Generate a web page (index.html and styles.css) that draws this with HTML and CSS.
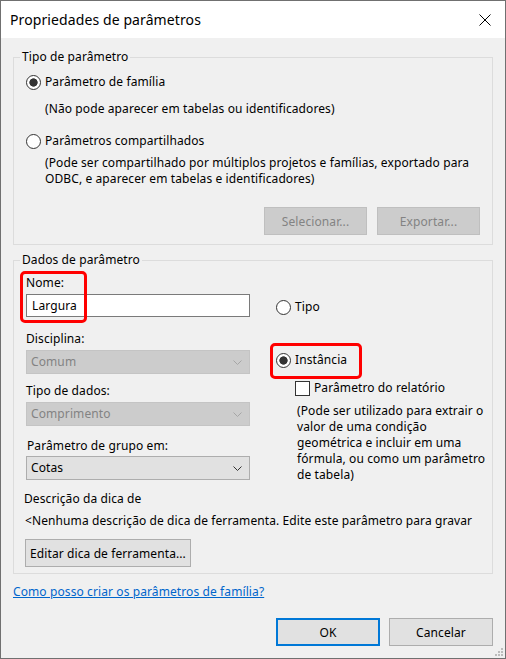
FILE: index.html
```html
<!DOCTYPE html>
<html lang="pt">
<head>
  <meta charset="UTF-8">
  <title>Propriedades de parâmetros</title>
  <link rel="stylesheet" href="styles.css">
</head>
<body>
  <div class="window">
    <div class="titlebar">
      <span class="title">Propriedades de parâmetros</span>
      <svg class="close" viewBox="0 0 12 12"><path d="M0.5 0.5L11.5 11.5M11.5 0.5L0.5 11.5" stroke="#000" stroke-width="1" fill="none"/></svg>
    </div>
    <div class="content">
      <fieldset class="group">
        <legend>Tipo de parâmetro</legend>
        <div class="group-body type-body">
          <div class="option"><span class="radio checked"></span>Parâmetro de família</div>
          <p class="note note-family">(Não pode aparecer em tabelas ou identificadores)</p>
          <div class="option option-shared"><span class="radio"></span>Parâmetros compartilhados</div>
          <p class="note note-shared">(Pode ser compartilhado por múltiplos projetos e famílias, exportado para<br>ODBC, e aparecer em tabelas e identificadores)</p>
          <div class="group-actions">
            <button class="btn" disabled>Selecionar...</button>
            <button class="btn" disabled>Exportar...</button>
          </div>
        </div>
      </fieldset>

      <fieldset class="group group-data">
        <legend>Dados de parâmetro</legend>
        <div class="group-body data-body">
          <div class="data-columns">
            <div class="data-left">
              <div class="field-name">
                <div class="field-label">Nome:</div>
                <div class="input">Largura</div>
                <span class="highlight highlight-name"></span>
              </div>
              <div class="field-label label-discipline">Disciplina:</div>
              <div class="combo disabled">Comum
                <svg class="chevron" viewBox="0 0 9 5"><path d="M0.5 0.5L4.5 4.5L8.5 0.5" fill="none" stroke="currentColor"/></svg>
              </div>
              <div class="field-label label-datatype">Tipo de dados:</div>
              <div class="combo disabled">Comprimento
                <svg class="chevron" viewBox="0 0 9 5"><path d="M0.5 0.5L4.5 4.5L8.5 0.5" fill="none" stroke="currentColor"/></svg>
              </div>
              <div class="field-label label-group">Parâmetro de grupo em:</div>
              <div class="combo combo-group">Cotas
                <svg class="chevron" viewBox="0 0 9 5"><path d="M0.5 0.5L4.5 4.5L8.5 0.5" fill="none" stroke="currentColor"/></svg>
              </div>
            </div>
            <div class="data-right">
              <div class="option option-type"><span class="radio"></span>Tipo</div>
              <div class="option option-instance"><span class="radio checked"></span>Instância
                <span class="highlight highlight-instance"></span>
              </div>
              <div class="check-row"><span class="checkbox"></span>Parâmetro do relatório</div>
              <p class="report-note">(Pode ser utilizado para extrair o<br>valor de uma condição<br>geométrica e incluir em uma<br>fórmula, ou como um parâmetro<br>de tabela)</p>
            </div>
          </div>
          <div class="tooltip-title">Descrição da dica de</div>
          <div class="tooltip-text">&lt;Nenhuma descrição de dica de ferramenta. Edite este parâmetro para gravar</div>
          <button class="btn btn-tooltip">Editar dica de ferramenta...</button>
        </div>
      </fieldset>

      <a class="help-link" href="#">Como posso criar os parâmetros de família?</a>

      <div class="footer">
        <button class="btn btn-ok">OK</button>
        <button class="btn">Cancelar</button>
      </div>
    </div>
    <svg class="grip" viewBox="0 0 9 9">
      <rect x="6" y="0" width="2" height="2"/>
      <rect x="3" y="3" width="2" height="2"/>
      <rect x="6" y="3" width="2" height="2"/>
      <rect x="0" y="6" width="2" height="2"/>
      <rect x="3" y="6" width="2" height="2"/>
      <rect x="6" y="6" width="2" height="2"/>
    </svg>
  </div>
</body>
</html>
```

FILE: styles.css
```css
* {
  margin: 0;
  padding: 0;
  box-sizing: border-box;
}
body {
  background: #fff;
  font-family: "Noto Sans", "Segoe UI", sans-serif;
  font-size: 12px;
  line-height: 16px;
  letter-spacing: 0.1px;
  color: #000;
}
.window {
  position: relative;
  width: 506px;
  height: 659px;
  border: 1px solid #707070;
  background: #f0f0f0;
}
.titlebar {
  height: 37px;
  background: #fff;
  display: flex;
  align-items: center;
  justify-content: space-between;
  padding: 0 14px 0 9px;
}
.title {
  font-size: 14px;
}
.close {
  width: 12px;
  height: 12px;
}
.content {
  padding: 11px 12px 0;
}
.group {
  border: 1px solid #dcdcdc;
  min-width: 0;
}
.group legend {
  margin-left: 6px;
  padding: 0 2px;
  line-height: 16px;
}
.group-body {
  padding: 9px 12px 9px 12px;
}
.option {
  display: flex;
  align-items: center;
  gap: 4px;
}
.radio {
  width: 15px;
  height: 15px;
  border: 1px solid #333;
  border-radius: 50%;
  background: #fff;
}
.radio.checked {
  background: radial-gradient(circle, #333 0 3.8px, #fff 4.5px);
}
.note {
  margin-left: 19px;
}
.note-family {
  margin-top: 11px;
}
.option-shared {
  margin-top: 16px;
}
.note-shared {
  margin-top: 6px;
}
.group-actions {
  margin-top: 20px;
  display: flex;
  justify-content: flex-end;
  gap: 10px;
}
.btn {
  font-family: inherit;
  font-size: 12px;
  letter-spacing: 0.1px;
  color: #000;
  height: 28px;
  width: 103px;
  background: #e1e1e1;
  border: 1px solid #adadad;
}
.btn:disabled {
  background: #cccccc;
  border-color: #bfbfbf;
  color: #838383;
}
.group-data {
  margin-top: 7px;
}
.data-body {
  padding: 7px 12px 6px;
}
.data-columns {
  display: grid;
  grid-template-columns: 224px 1fr;
  column-gap: 26px;
  align-items: start;
}
.field-name {
  position: relative;
}
.input {
  margin-top: 3px;
  height: 23px;
  background: #fff;
  border: 1px solid #7a7a7a;
  padding-left: 5px;
  line-height: 21px;
}
.label-discipline {
  margin-top: 14px;
}
.label-datatype {
  margin-top: 9px;
}
.label-group {
  margin-top: 12px;
  margin-left: 1px;
}
.combo {
  margin-top: 3px;
  height: 24px;
  display: flex;
  align-items: center;
  justify-content: space-between;
  padding: 0 7px 0 4px;
  background: #e1e1e1;
  border: 1px solid #adadad;
  color: #000;
}
.combo.disabled {
  background: #cccccc;
  border-color: #c4c4c4;
  color: #838383;
}
.combo.disabled .chevron {
  color: #a6a6a6;
}
.combo-group {
  margin-top: 2px;
}
.chevron {
  width: 9px;
  height: 5px;
  color: #333;
}
.highlight {
  position: absolute;
  border: 3px solid #ff0000;
  border-radius: 5px;
}
.highlight-name {
  left: -6px;
  top: -4px;
  width: 67px;
  height: 52px;
}
.option-type {
  margin-top: 24px;
}
.option-instance {
  position: relative;
  margin-top: 37px;
}
.highlight-instance {
  left: -6px;
  top: -9px;
  width: 92px;
  height: 36px;
}
.check-row {
  margin-top: 12px;
  margin-left: 19px;
  display: flex;
  align-items: center;
  gap: 4px;
}
.checkbox {
  width: 15px;
  height: 15px;
  border: 1px solid #333;
  background: #fff;
}
.report-note {
  margin-top: 7px;
  margin-left: 21px;
  white-space: nowrap;
}
.tooltip-title {
  margin-top: 8px;
  margin-left: -2px;
}
.tooltip-text {
  margin-top: 6px;
  margin-left: -1px;
  white-space: nowrap;
  overflow: hidden;
  width: 452px;
}
.btn-tooltip {
  margin-top: 10px;
  margin-left: -1px;
  width: 166px;
}
.help-link {
  display: block;
  margin-top: 10px;
  color: #0066cc;
  text-decoration: underline;
  width: max-content;
}
.footer {
  margin-top: 18px;
  display: flex;
  justify-content: flex-end;
  gap: 9px;
}
.footer .btn {
  width: 104px;
}
.btn-ok {
  border: 2px solid #0078d7;
}
.grip {
  position: absolute;
  right: 1px;
  bottom: 1px;
  width: 9px;
  height: 9px;
  fill: #bcbcbc;
}
```
